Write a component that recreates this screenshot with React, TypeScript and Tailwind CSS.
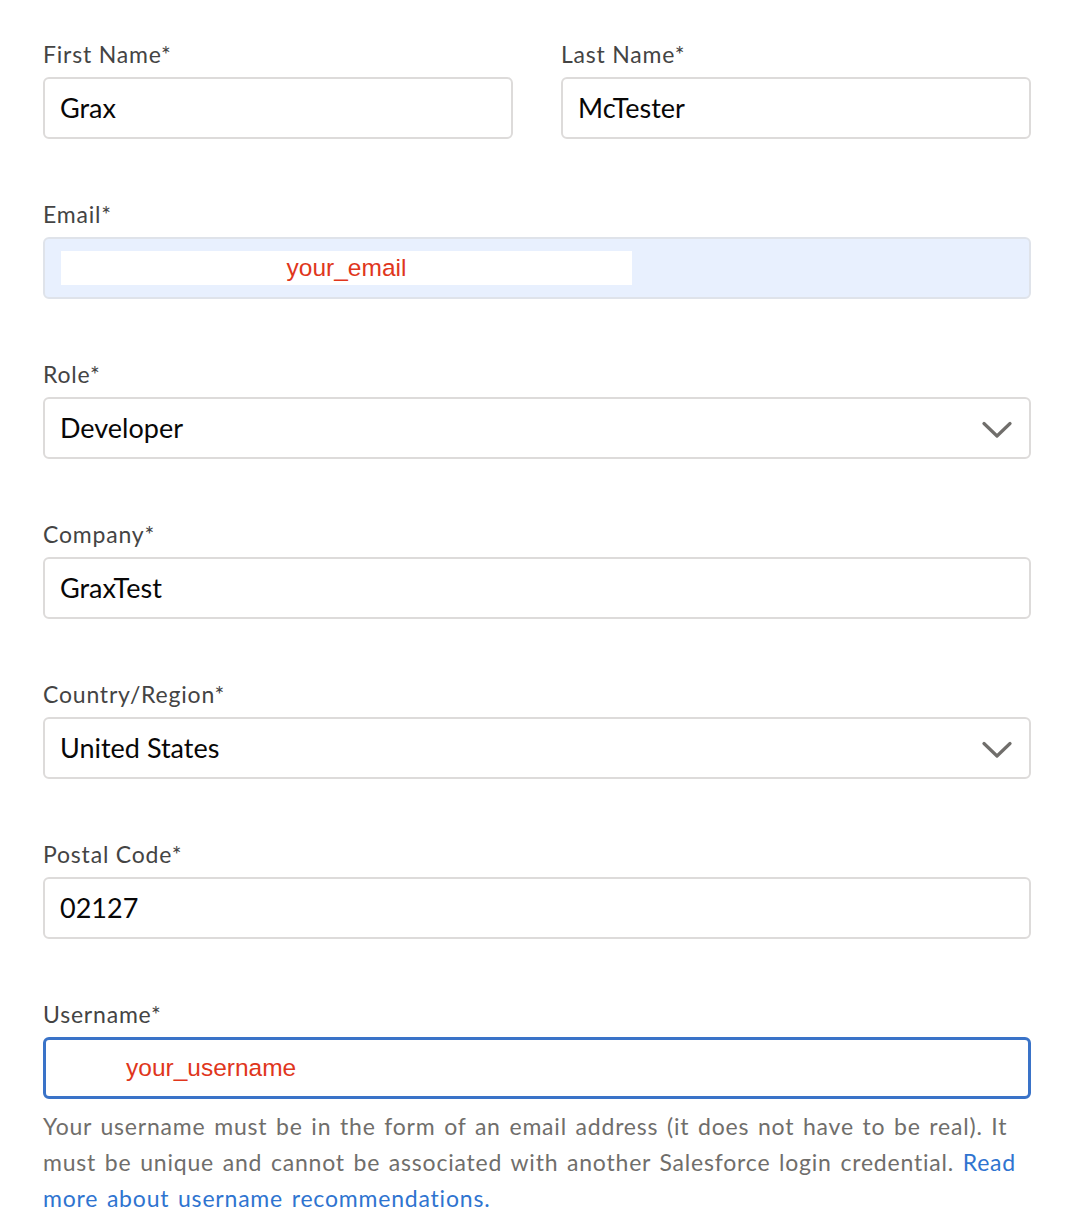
import React from "react";

interface fieldProps {
  label: string;
  children: React.ReactNode;
}

const Label = ({ text }: { text: string }) => (
  <label className="h-[30px] leading-[30px] text-[23px] tracking-[0.8px] text-[#444444] mb-[8px]">{text}</label>
);

const Field = ({ label, children }: fieldProps) => {
  return (
    <div className="flex flex-col">
      <Label text={label} />
      {children}
    </div>
  );
};

const TextBox = ({ value }: { value: string }) => {
  return (
    <div className="h-[62px] rounded-[6px] border-2 border-[#dddbda] bg-white flex items-center pl-[15px] pr-[17px] text-[27px] text-[#080707]">
      {value}
    </div>
  );
};

const Chevron = () => (
  <svg width="30" height="18" viewBox="0 0 30 18" fill="none" className="mt-[3px]">
    <path d="M2 2.5 L15 15 L28 2.5" stroke="#706e6b" strokeWidth="3.2" strokeLinecap="round" strokeLinejoin="round" />
  </svg>
);

const SelectBox = ({ value }: { value: string }) => {
  return (
    <div className="h-[62px] rounded-[6px] border-2 border-[#dddbda] bg-white flex items-center justify-between pl-[15px] pr-[17px] text-[27px] text-[#080707]">
      <span>{value}</span>
      <Chevron />
    </div>
  );
};

export default function App() {
  return (
    <div className="bg-white min-h-[1226px] pt-[39px] pl-[43px] pr-[46px] font-['Lato','Open_Sans',sans-serif]">
      <div className="flex flex-col gap-[60px]">
        <div className="grid grid-cols-2 gap-[48px]">
          <Field label="First Name*">
            <TextBox value="Grax" />
          </Field>
          <Field label="Last Name*">
            <TextBox value="McTester" />
          </Field>
        </div>

        <Field label="Email*">
          <div className="h-[62px] rounded-[6px] border-2 border-[#dfe3ea] bg-[#e8f0fe] flex items-center px-[16px]">
            <div className="w-[571px] h-[34px] bg-white flex items-center justify-center font-['Liberation_Sans',Arial,sans-serif] text-[24.5px] text-[#e0361c]">
              your_email
            </div>
          </div>
        </Field>

        <Field label="Role*">
          <SelectBox value="Developer" />
        </Field>

        <Field label="Company*">
          <TextBox value="GraxTest" />
        </Field>

        <Field label="Country/Region*">
          <SelectBox value="United States" />
        </Field>

        <Field label="Postal Code*">
          <TextBox value="02127" />
        </Field>

        <div className="flex flex-col">
          <Label text="Username*" />
          <div className="h-[62px] rounded-[6px] border-[3px] border-[#3a73c8] bg-white flex items-center pl-[80px] font-['Liberation_Sans',Arial,sans-serif] text-[24.5px] text-[#e0361c]">
            your_username
          </div>
          <p className="mt-[9px] text-[23px] leading-[36px] tracking-[0.8px] [word-spacing:2px] text-[#706e6b]">
            Your username must be in the form of an email address (it does not have to be real). It must be unique and cannot be associated with another Salesforce login credential.{" "}
            <a href="#" className="text-[#2f74d0]">Read more about username recommendations.</a>
          </p>
        </div>
      </div>
    </div>
  );
}
